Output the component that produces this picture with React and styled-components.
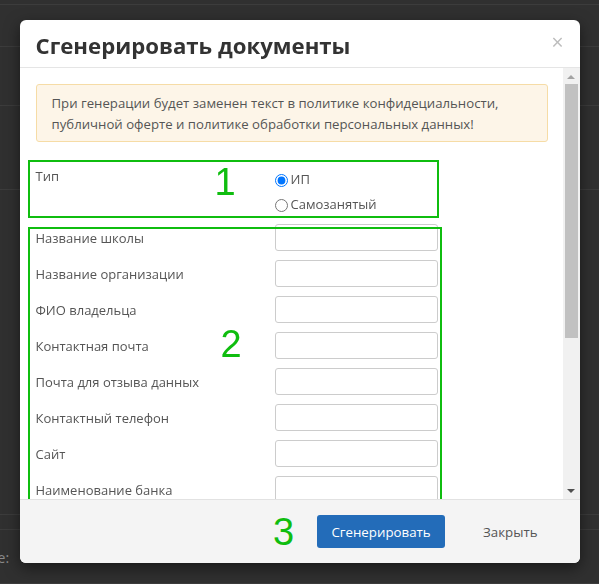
import React from 'react'
import styled, { createGlobalStyle } from 'styled-components'

const GlobalStyle = createGlobalStyle`
  html, body {
    margin: 0;
    padding: 0;
  }

  body {
    background: #303030;
    font-family: 'Open Sans', 'Liberation Sans', sans-serif;
    overflow: hidden;
  }

  * {
    box-sizing: border-box;
  }
`

/* dimmed page behind the dialog */
const Page = styled.div`
  height: 584px;
  display: flex;
  flex-direction: column;
`

const PageRow = styled.div`
  height: ${props => props.h}px;
  border-bottom: 1px solid #3c3c3c;
  color: #8a8a8a;
  font-size: 14px;
  padding-top: ${props => props.pt || 0}px;
  overflow: hidden;
  white-space: nowrap;
`

const Ghost = styled.div`
  margin-left: -44px;
  line-height: 20px;
`

const Overlay = styled.div`
  position: fixed;
  inset: 0;
  display: flex;
  justify-content: center;
  align-items: flex-start;
  padding-top: 20px;
`

const Modal = styled.div`
  width: 560px;
  height: 543px;
  background: #fff;
  border-radius: 6px;
  box-shadow: 0 5px 15px rgba(0, 0, 0, 0.5);
  display: flex;
  flex-direction: column;
  overflow: hidden;
`

const Header = styled.div`
  height: 48px;
  flex-shrink: 0;
  padding: 3px 16px 0;
  display: flex;
  align-items: center;
  justify-content: space-between;
  border-bottom: 1px solid #e5e5e5;
`

const Title = styled.h4`
  margin: 0;
  font-size: 22.2px;
  font-weight: 700;
  color: #333;
`

const CloseX = styled.span`
  color: #bdbdbd;
  font-size: 21px;
  line-height: 1;
  margin-top: -6px;
`

const Body = styled.div`
  flex: 1;
  min-height: 0;
  display: flex;
`

const Content = styled.div`
  flex: 1;
  min-width: 0;
  padding: 16px 15px 0 16px;
  overflow: hidden;
`

const Scrollbar = styled.div`
  width: 17px;
  flex-shrink: 0;
  background: #f1f1f1;
  display: flex;
  flex-direction: column;
  align-items: center;
`

const Arrow = styled.span`
  width: 0;
  height: 0;
  border-left: 4px solid transparent;
  border-right: 4px solid transparent;
  margin: 7px 0;
  ${props =>
    props.down
      ? 'border-top: 4px solid #505050; margin-top: auto; margin-bottom: 6px;'
      : 'border-bottom: 4px solid #a3a3a3;'}
`

const Thumb = styled.div`
  width: 13px;
  height: 254px;
  margin-top: -2px;
  background: #c1c1c1;
`

const Alert = styled.div`
  background: #fdf5e8;
  border: 1px solid #f6dca6;
  border-radius: 3px;
  padding: 8px 15px 6px;
  color: #555;
  font-size: 13.2px;
  line-height: 21px;
`

const Form = styled.div`
  margin-top: 24px;
  display: flex;
  flex-direction: column;
  gap: 8px;
`

/* green markup boxes drawn over the screenshot */
const Annotated = styled.div`
  position: relative;

  &::after {
    content: '';
    position: absolute;
    top: ${props => props.box[0]}px;
    right: ${props => props.box[1]}px;
    bottom: ${props => props.box[2]}px;
    left: ${props => props.box[3]}px;
    border: 2px solid #0fbd0f;
    pointer-events: none;
  }
`

const Mark = styled.span`
  position: absolute;
  left: ${props => props.x}px;
  top: ${props => props.y}px;
  font-family: 'Liberation Sans', Arial, sans-serif;
  font-size: 38px;
  line-height: 38px;
  color: #0fbd0f;
`

const FooterMark = styled(Mark)`
  position: static;
  margin-right: 23px;
`

const TypeRow = styled(Annotated)`
  display: grid;
  grid-template-columns: 239px 1fr;
`

const Fields = styled(Annotated)`
  display: flex;
  flex-direction: column;
  gap: 9px;
`

const FieldRow = styled.div`
  display: grid;
  grid-template-columns: 239px 163px;
  align-items: center;
  height: 27px;
`

const Label = styled.label`
  color: #555;
  font-size: 13px;
  line-height: 20px;
`

const Input = styled.input`
  width: 163px;
  height: 27px;
  border: 1px solid #ccc;
  border-radius: 3px;
  background: #fff;
  padding: 0 8px;
  font: inherit;
`

const Options = styled.div`
  display: flex;
  flex-direction: column;
`

const Option = styled.label`
  display: flex;
  align-items: center;
  height: 25px;
  color: #555;
  font-size: 13px;

  input {
    margin: 3px 3px 0 0;
  }
`

const Footer = styled.div`
  height: 64px;
  flex-shrink: 0;
  background: #f4f4f4;
  border-top: 1px solid #e2e2e2;
  display: flex;
  align-items: center;
  justify-content: flex-end;
  padding-right: 30px;
`

const Button = styled.button`
  height: 33px;
  border-radius: 3px;
  border: none;
  font-family: inherit;
  font-size: 13.3px;
  cursor: pointer;
  background: ${props => (props.primary ? '#236cb9' : 'transparent')};
  color: ${props => (props.primary ? '#fff' : '#555')};
  width: ${props => (props.primary ? '128px' : 'auto')};
  padding: 0 12px;
  margin-right: ${props => (props.primary ? '26px' : '0')};
`

const fields = [
  'Название школы',
  'Название организации',
  'ФИО владельца',
  'Контактная почта',
  'Почта для отзыва данных',
  'Контактный телефон',
  'Сайт',
  'Наименование банка',
]

const App = () => (
  <>
    <GlobalStyle />
    <Page>
      <PageRow h={5} />
      <PageRow h={42} />
      <PageRow h={59} />
      <PageRow h={84} />
      <PageRow h={325} />
      <PageRow h={15} />
      <PageRow h={54} pt={18}>
        <Ghost>Ссылке:</Ghost>
        <Ghost>Policy</Ghost>
      </PageRow>
    </Page>

    <Overlay>
      <Modal>
        <Header>
          <Title>Сгенерировать документы</Title>
          <CloseX>×</CloseX>
        </Header>

        <Body>
          <Content>
            <Alert>
              При генерации будет заменен текст в политике конфидециальности,
              публичной оферте и политике обработки персональных данных!
            </Alert>

            <Form>
              <TypeRow box={[-6, 109, -2, -8]}>
                <Label>Тип</Label>
                <Options>
                  <Option>
                    <input type="radio" name="type" defaultChecked />
                    ИП
                  </Option>
                  <Option>
                    <input type="radio" name="type" />
                    Самозанятый
                  </Option>
                </Options>
                <Mark x={179} y={-3}>
                  1
                </Mark>
              </TypeRow>

              <Fields box={[3, 106, -40, -8]}>
                {fields.map(name => (
                  <FieldRow key={name}>
                    <Label>{name}</Label>
                    <Input type="text" />
                  </FieldRow>
                ))}
                <Mark x={185} y={101}>
                  2
                </Mark>
              </Fields>
            </Form>
          </Content>

          <Scrollbar>
            <Arrow />
            <Thumb />
            <Arrow down />
          </Scrollbar>
        </Body>

        <Footer>
          <FooterMark>3</FooterMark>
          <Button primary>Сгенерировать</Button>
          <Button>Закрыть</Button>
        </Footer>
      </Modal>
    </Overlay>
  </>
)

export default App
